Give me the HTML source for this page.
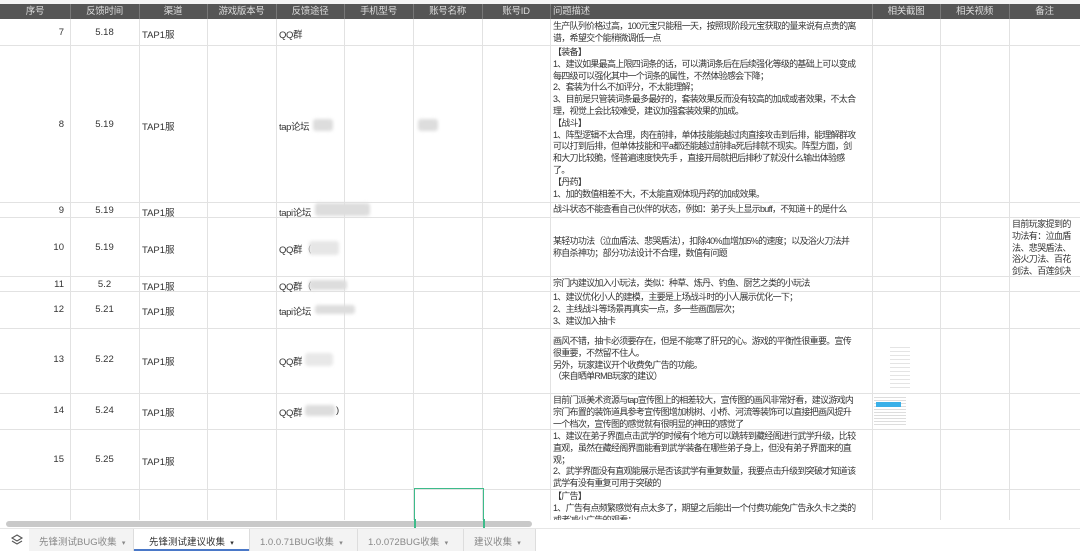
<!DOCTYPE html>
<html><head><meta charset="utf-8"><style>
*{margin:0;padding:0;box-sizing:border-box}
body{width:1080px;height:551px;overflow:hidden;background:#fff;font-family:"Liberation Sans","Noto Sans CJK SC",sans-serif;font-size:9.5px;color:#333;position:relative}
.a{position:absolute;white-space:nowrap}
.hd{position:absolute;top:4px;height:15px;left:0;width:1080px;background:#555}
.ht{position:absolute;top:4px;height:15px;line-height:15px;color:#ddd;font-size:9.5px;text-align:center;letter-spacing:-0.3px}
.vl{position:absolute;top:19px;width:1px;height:509px;background:#e2e2e2}
.hl{position:absolute;left:0;width:1080px;height:1px;background:#e2e2e2}
.d{position:absolute;left:553px;line-height:11.8px;white-space:nowrap;font-size:9px;letter-spacing:-0.72px;color:#333}
.b{position:absolute;background:#ddd;border-radius:3px;filter:blur(1.5px)}
.n{position:absolute;width:64px;text-align:right}
.t{position:absolute;left:70px;width:69px;text-align:center}
.c{position:absolute;left:142px}
.w{position:absolute;left:279px;letter-spacing:-0.4px}
</style></head><body>
<div style="position:absolute;left:0;top:0;width:1080px;height:4px;background:#f4f4f4"></div>
<div class="hd"></div>
<div class="ht" style="left:0;width:70px">序号</div>
<div class="ht" style="left:70px;width:69px">反馈时间</div>
<div class="ht" style="left:139px;width:68px">渠道</div>
<div class="ht" style="left:207px;width:69px">游戏版本号</div>
<div class="ht" style="left:276px;width:68px">反馈途径</div>
<div class="ht" style="left:344px;width:69px">手机型号</div>
<div class="ht" style="left:413px;width:69px">账号名称</div>
<div class="ht" style="left:482px;width:68px">账号ID</div>
<div class="ht" style="left:553px;text-align:left">问题描述</div>
<div class="ht" style="left:872px;width:68px">相关截图</div>
<div class="ht" style="left:940px;width:69px">相关视频</div>
<div class="ht" style="left:1009px;width:71px">备注</div>
<div style="position:absolute;top:4px;height:15px;left:70px;width:1px;background:#777"></div>
<div style="position:absolute;top:4px;height:15px;left:139px;width:1px;background:#777"></div>
<div style="position:absolute;top:4px;height:15px;left:207px;width:1px;background:#777"></div>
<div style="position:absolute;top:4px;height:15px;left:276px;width:1px;background:#777"></div>
<div style="position:absolute;top:4px;height:15px;left:344px;width:1px;background:#777"></div>
<div style="position:absolute;top:4px;height:15px;left:413px;width:1px;background:#777"></div>
<div style="position:absolute;top:4px;height:15px;left:482px;width:1px;background:#777"></div>
<div style="position:absolute;top:4px;height:15px;left:550px;width:1px;background:#777"></div>
<div style="position:absolute;top:4px;height:15px;left:872px;width:1px;background:#777"></div>
<div style="position:absolute;top:4px;height:15px;left:940px;width:1px;background:#777"></div>
<div style="position:absolute;top:4px;height:15px;left:1009px;width:1px;background:#777"></div>

<div class="vl" style="left:70px"></div><div class="vl" style="left:139px"></div><div class="vl" style="left:207px"></div><div class="vl" style="left:276px"></div><div class="vl" style="left:344px"></div><div class="vl" style="left:413px"></div><div class="vl" style="left:482px"></div><div class="vl" style="left:550px"></div><div class="vl" style="left:872px"></div><div class="vl" style="left:940px"></div><div class="vl" style="left:1009px"></div>
<div class="hl" style="top:45px"></div><div class="hl" style="top:202px"></div><div class="hl" style="top:217px"></div><div class="hl" style="top:276px"></div><div class="hl" style="top:291px"></div><div class="hl" style="top:328px"></div><div class="hl" style="top:393px"></div><div class="hl" style="top:429px"></div><div class="hl" style="top:489px"></div>

<div class="n" style="top:27px">7</div><div class="t" style="top:27px">5.18</div><div class="c" style="top:27px">TAP1服</div><div class="w" style="top:27px">QQ群</div>
<div class="n" style="top:119px">8</div><div class="t" style="top:119px">5.19</div><div class="c" style="top:119px">TAP1服</div><div class="w" style="top:119px">tap论坛</div>
<div class="b" style="left:313px;top:119px;width:20px;height:12px"></div><div class="b" style="left:418px;top:119px;width:20px;height:12px"></div>
<div class="n" style="top:205px">9</div><div class="t" style="top:205px">5.19</div><div class="c" style="top:205px">TAP1服</div><div class="w" style="top:205px">tapi论坛</div>
<div class="b" style="left:315px;top:203px;width:55px;height:13px"></div>
<div class="n" style="top:242px">10</div><div class="t" style="top:242px">5.19</div><div class="c" style="top:242px">TAP1服</div><div class="w" style="top:242px">QQ群（</div>
<div class="b" style="left:309px;top:241px;width:30px;height:14px;background:#e6e6e6"></div>
<div class="n" style="top:279px">11</div><div class="t" style="top:279px">5.2</div><div class="c" style="top:279px">TAP1服</div><div class="w" style="top:279px">QQ群（</div>
<div class="b" style="left:309px;top:280px;width:38px;height:10px"></div>
<div class="n" style="top:304px">12</div><div class="t" style="top:304px">5.21</div><div class="c" style="top:304px">TAP1服</div><div class="w" style="top:304px">tapi论坛</div>
<div class="b" style="left:315px;top:305px;width:40px;height:9px"></div>
<div class="n" style="top:354px">13</div><div class="t" style="top:354px">5.22</div><div class="c" style="top:354px">TAP1服</div><div class="w" style="top:354px">QQ群</div>
<div class="b" style="left:305px;top:353px;width:28px;height:13px;background:#e8e8e8"></div>
<div class="n" style="top:405px">14</div><div class="t" style="top:405px">5.24</div><div class="c" style="top:405px">TAP1服</div><div class="w" style="top:405px">QQ群</div>
<div class="b" style="left:305px;top:405px;width:30px;height:11px"></div><div class="a" style="left:336px;top:405px">)</div>
<div class="n" style="top:454px">15</div><div class="t" style="top:454px">5.25</div><div class="c" style="top:454px">TAP1服</div>

<div class="d" style="top:21px">生产队列价格过高，100元宝只能租一天，按照现阶段元宝获取的量来说有点贵的离<br>谱，希望交个能稍微调低一点</div>
<div class="d" style="top:47px">【装备】<br>1、建议如果最高上限四词条的话，可以满词条后在后续强化等级的基础上可以变成<br>每四级可以强化其中一个词条的属性，不然体验感会下降；<br>2、套装为什么不加评分，不太能理解；<br>3、目前是只管装词条最多最好的，套装效果反而没有较高的加成或者效果，不太合<br>理，视觉上会比较难受，建议加强套装效果的加成。<br>【战斗】<br>1、阵型逻辑不太合理，肉在前排，单体技能能越过肉直接攻击到后排，能理解群攻<br>可以打到后排，但单体技能和平a都还能越过前排a死后排就不现实。阵型方面，剑<br>和大刀比较脆，怪普遍速度快先手 ，直接开局就把后排秒了就没什么输出体验感<br>了。<br>【丹药】<br>1、加的数值相差不大，不太能直观体现丹药的加成效果。</div>
<div class="d" style="top:204px">战斗状态不能查看自己伙伴的状态，例如：弟子头上显示buff，不知道＋的是什么</div>
<div class="d" style="top:236px">某轻功功法（泣血盾法、悲哭盾法），扣除40%血增加5%的速度；以及浴火刀法并<br>称自杀神功；部分功法设计不合理，数值有问题</div>
<div class="a" style="left:1012px;top:219px;line-height:11.8px;font-size:9px;letter-spacing:-0.6px">目前玩家提到的<br>功法有：泣血盾<br>法、悲哭盾法、<br>浴火刀法、百花<br>剑法、百莲剑决</div>
<div class="d" style="top:278px">宗门内建议加入小玩法，类似：种草、炼丹、钓鱼、厨艺之类的小玩法</div>
<div class="d" style="top:292px">1、建议优化小人的建模，主要是上场战斗时的小人展示优化一下；<br>2、主线战斗等场景再真实一点，多一些画面层次；<br>3、建议加入抽卡</div>
<div class="d" style="top:336px">画风不错，抽卡必须要存在，但是不能寒了肝兄的心。游戏的平衡性很重要。宣传<br>很重要，不然留不住人。<br>另外，玩家建议开个收费免广告的功能。<br>（来自晒单RMB玩家的建议）</div>
<div class="d" style="top:395px">目前门派美术资源与tap宣传图上的相差较大，宣传图的画风非常好看，建议游戏内<br>宗门布置的装饰道具参考宣传图增加桃树、小桥、河流等装饰可以直接把画风提升<br>一个档次，宣传图的感觉就有很明显的神田的感觉了</div>
<div class="d" style="top:431px">1、建议在弟子界面点击武学的时候有个地方可以跳转到藏经阁进行武学升级，比较<br>直观，虽然在藏经阁界面能看到武学装备在哪些弟子身上，但没有弟子界面来的直<br>观；<br>2、武学界面没有直观能展示是否该武学有重复数量，我要点击升级到突破才知道该<br>武学有没有重复可用于突破的</div>
<div class="d" style="top:491px">【广告】<br>1、广告有点频繁感觉有点太多了，期望之后能出一个付费功能免广告永久卡之类的<br>或者减少广告的观看；<br>2、广告位设置的可再多一点；</div>

<div style="position:absolute;left:890px;top:344px;width:20px;height:44px;background:repeating-linear-gradient(#fff 0 3px,#e4e4e4 3px 4px)"></div>
<div style="position:absolute;left:874px;top:395px;width:32px;height:32px;background:repeating-linear-gradient(#fff 0 2px,#ddd 2px 3px)"></div>
<div style="position:absolute;left:876px;top:402px;width:25px;height:5px;background:#3ab0e8"></div>

<div style="position:absolute;left:414px;top:488px;width:70px;height:44px;border:1.5px solid #3dbb8a"></div>

<div style="position:absolute;left:0;top:520px;width:1080px;height:8px;background:#fff"></div>
<div style="position:absolute;left:6px;top:521px;width:526px;height:6px;background:#c9c9c9;border-radius:3px"></div>
<div style="position:absolute;left:414px;top:519px;width:1.5px;height:12px;background:#3dbb8a"></div>
<div style="position:absolute;left:483px;top:519px;width:1.5px;height:12px;background:#3dbb8a"></div>

<div style="position:absolute;left:0;top:528px;width:1080px;height:23px;background:#fff;border-top:1px solid #e6e6e6"></div>
<svg style="position:absolute;left:10px;top:533px" width="14" height="14" viewBox="0 0 14 14"><path d="M7 2 L12 5 L7 8 L2 5 Z" fill="none" stroke="#555" stroke-width="1.1"/><path d="M2 8 L7 11 L12 8" fill="none" stroke="#555" stroke-width="1.1"/></svg>
<div style="position:absolute;left:29px;top:529px;width:506px;height:22px;background:#f3f3f3"></div>
<div style="position:absolute;left:133px;top:529px;width:116px;height:22px;background:#fff;border-bottom:2px solid #4a78c8"></div>
<div style="position:absolute;top:529px;left:133px;width:1px;height:22px;background:#ddd"></div>
<div style="position:absolute;top:529px;left:249px;width:1px;height:22px;background:#ddd"></div>
<div style="position:absolute;top:529px;left:357px;width:1px;height:22px;background:#ddd"></div>
<div style="position:absolute;top:529px;left:463px;width:1px;height:22px;background:#ddd"></div>
<div style="position:absolute;top:529px;left:535px;width:1px;height:22px;background:#ddd"></div>
<div class="a" style="left:39px;top:534px;color:#888;font-size:9.5px">先锋测试BUG收集 &nbsp;<span style="font-size:7px">▾</span></div>
<div class="a" style="left:149px;top:534px;color:#333;font-size:9.5px">先锋测试建议收集 &nbsp;<span style="font-size:7px">▾</span></div>
<div class="a" style="left:260px;top:534px;color:#888;font-size:9.5px">1.0.0.71BUG收集 &nbsp;<span style="font-size:7px">▾</span></div>
<div class="a" style="left:368px;top:534px;color:#888;font-size:9.5px">1.0.072BUG收集 &nbsp;<span style="font-size:7px">▾</span></div>
<div class="a" style="left:474px;top:534px;color:#888;font-size:9.5px">建议收集 &nbsp;<span style="font-size:7px">▾</span></div>
</body></html>
